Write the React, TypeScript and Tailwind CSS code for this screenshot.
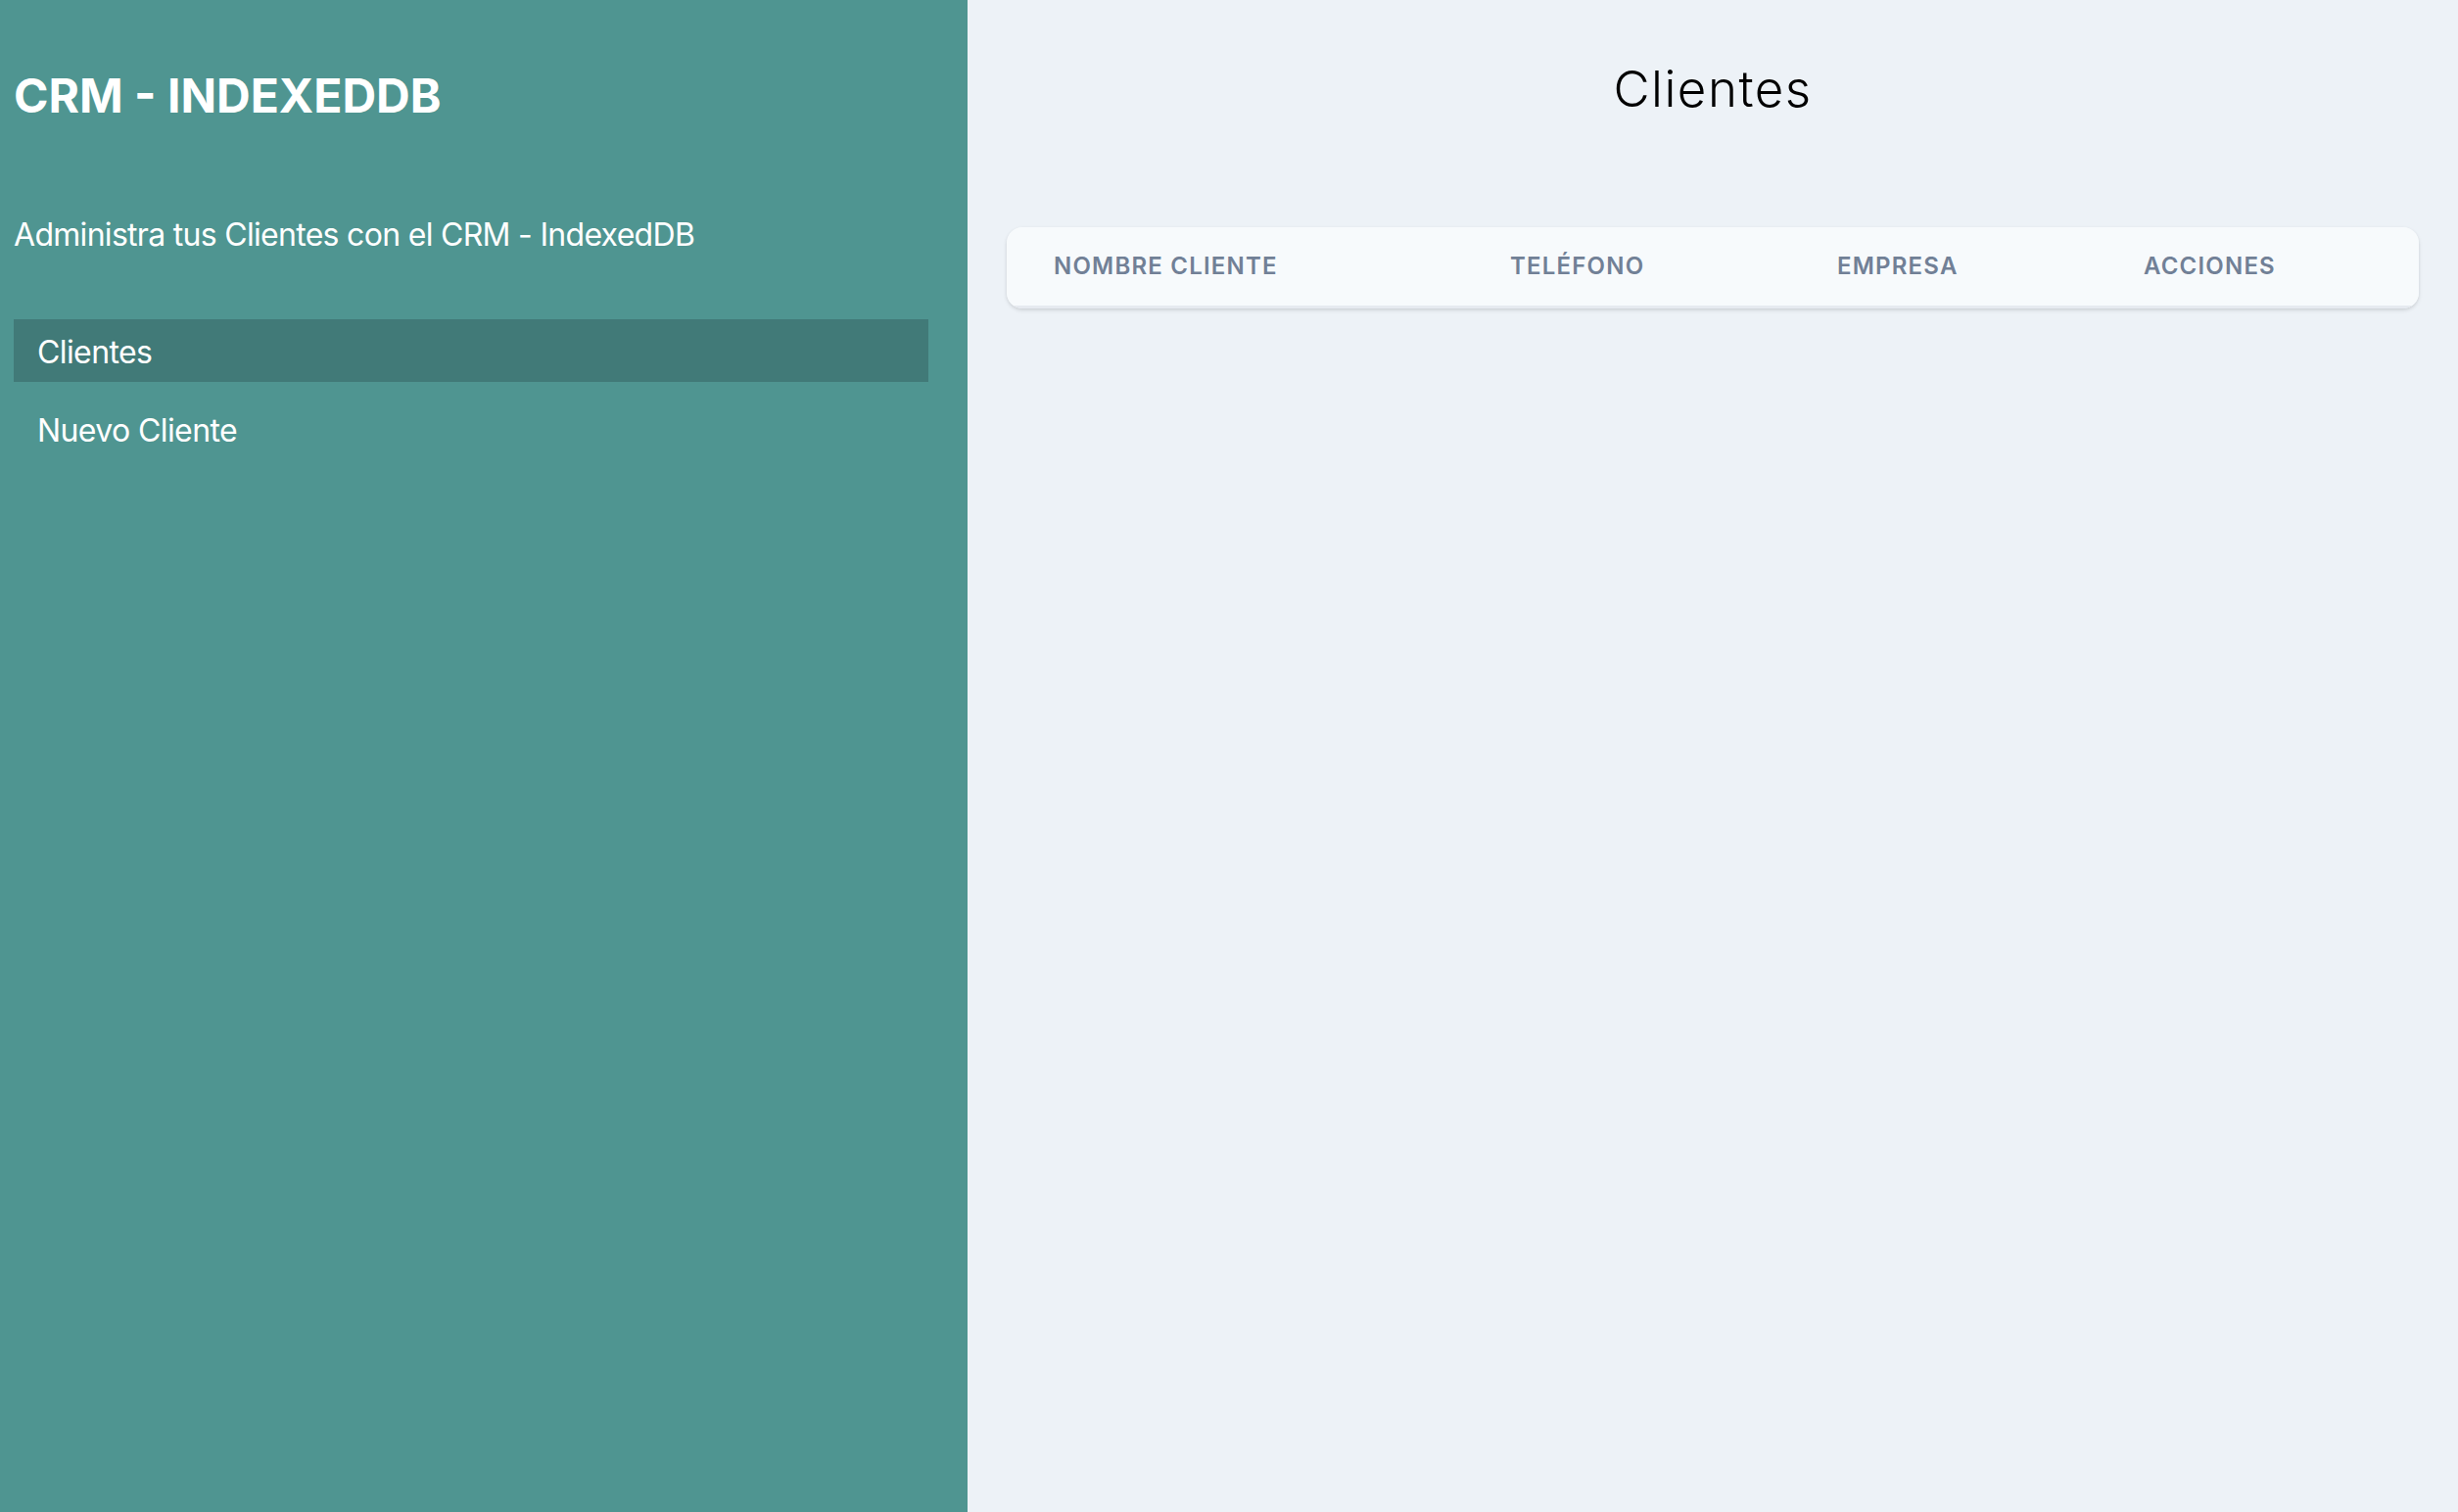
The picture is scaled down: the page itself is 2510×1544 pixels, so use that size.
const columnas = [
  { label: 'Nombre Cliente', width: 'w-[466px]' },
  { label: 'Teléfono', width: 'w-[334px]' },
  { label: 'Empresa', width: 'w-[313px]' },
  { label: 'Acciones', width: '' },
];

const App = () => {
  return (
    <div className="min-h-screen flex bg-[#edf2f7] font-['Inter','Liberation_Sans',sans-serif]">
      {/* Sidebar */}
      <aside className="w-[988px] shrink-0 bg-[#4f9591] pl-[14px] pr-[40px] pt-[66px]">
        <h2 className="text-[48px] leading-[64px] font-bold text-white">CRM - INDEXEDDB</h2>
        <p className="mt-[86px] text-[32px] leading-[48px] text-white tracking-[-0.7px]">
          Administra tus Clientes con el CRM - IndexedDB
        </p>

        <nav className="mt-[62px] flex flex-col gap-4">
          <a href="#" className="block bg-[#417a78] px-6 pt-[10px] pb-[6px] text-[32px] leading-[48px] text-white tracking-[-0.6px]">
            Clientes
          </a>
          <a href="#" className="block px-6 pt-[10px] pb-[6px] text-[32px] leading-[48px] text-white tracking-[-0.6px]">
            Nuevo Cliente
          </a>
        </nav>
      </aside>

      {/* Main */}
      <main className="flex-grow px-10 pt-[59px]">
        <h1 className="text-center text-[51px] leading-[64px] font-light tracking-[1.5px] text-black">Clientes</h1>

        <div className="mt-[109px] rounded-2xl shadow-[0_2px_4px_rgba(0,0,0,0.1),0_1px_3px_rgba(0,0,0,0.06)] overflow-hidden">
          <table className="w-full table-fixed">
            <thead>
              <tr>
                {columnas.map((col) => (
                  <th
                    key={col.label}
                    className={`${col.width} px-12 py-6 border-b-[3px] border-[#e6eaf0] bg-[#f7fafc] text-left text-[24px] leading-8 font-semibold text-[#718096] uppercase tracking-[1.2px]`}
                  >
                    {col.label}
                  </th>
                ))}
              </tr>
            </thead>
            <tbody></tbody>
          </table>
        </div>
      </main>
    </div>
  );
};

export default App;
